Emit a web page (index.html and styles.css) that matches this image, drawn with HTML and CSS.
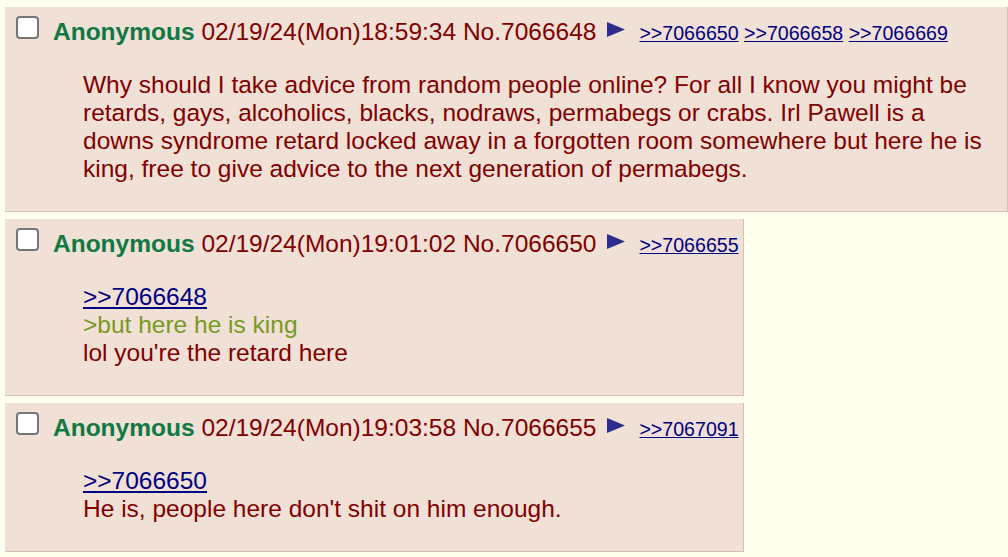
FILE: index.html
```html
<!DOCTYPE html>
<html>
<head>
<meta charset="utf-8">
<link rel="stylesheet" href="styles.css">
</head>
<body>
<div class="thread">
  <div class="reply">
    <div class="post-info">
      <span class="check"></span>
      <span class="info"><span class="name">Anonymous</span> <span class="date">02/19/24(Mon)18:59:34</span> <span class="no">No.7066648</span><svg class="menu" width="18" height="15" viewBox="0 0 18 15"><polygon points="0,0 18,7.5 0,15" fill="#2e2c8c"/></svg><span class="backlinks"><a href="#">&gt;&gt;7066650</a> <a href="#">&gt;&gt;7066658</a> <a href="#">&gt;&gt;7066669</a></span></span>
    </div>
    <blockquote class="message">Why should I take advice from random people online? For all I know you might be retards, gays, alcoholics, blacks, nodraws, permabegs or crabs. Irl Pawell is a downs syndrome retard locked away in a forgotten room somewhere but here he is king, free to give advice to the next generation of permabegs.</blockquote>
  </div>

  <div class="reply">
    <div class="post-info">
      <span class="check"></span>
      <span class="info"><span class="name">Anonymous</span> <span class="date">02/19/24(Mon)19:01:02</span> <span class="no">No.7066650</span><svg class="menu" width="18" height="15" viewBox="0 0 18 15"><polygon points="0,0 18,7.5 0,15" fill="#2e2c8c"/></svg><span class="backlinks"><a href="#">&gt;&gt;7066655</a></span></span>
    </div>
    <blockquote class="message"><a href="#" class="quotelink">&gt;&gt;7066648</a><br><span class="quote">&gt;but here he is king</span><br>lol you're the retard here</blockquote>
  </div>

  <div class="reply">
    <div class="post-info">
      <span class="check"></span>
      <span class="info"><span class="name">Anonymous</span> <span class="date">02/19/24(Mon)19:03:58</span> <span class="no">No.7066655</span><svg class="menu" width="18" height="15" viewBox="0 0 18 15"><polygon points="0,0 18,7.5 0,15" fill="#2e2c8c"/></svg><span class="backlinks"><a href="#">&gt;&gt;7067091</a></span></span>
    </div>
    <blockquote class="message"><a href="#" class="quotelink">&gt;&gt;7066650</a><br>He is, people here don't shit on him enough.</blockquote>
  </div>
</div>
</body>
</html>
```

FILE: styles.css
```css
html, body {
  margin: 0;
  padding: 0;
  background: #ffffee;
}

body {
  font-family: "Liberation Sans", Arial, sans-serif;
  font-size: 24.5px;
  line-height: 28px;
  color: #800000;
}

.thread {
  padding: 7px 0 0 5px;
}

.reply {
  display: table;
  background: #f0e0d6;
  border-right: 1px solid #d9bfb7;
  border-bottom: 1px solid #d9bfb7;
  padding: 10px 4px 0 11px;
  margin-bottom: 7px;
  box-sizing: border-box;
}

.post-info {
  display: flex;
  align-items: flex-start;
  height: 28px;
  white-space: nowrap;
}

.check {
  flex: none;
  width: 23px;
  height: 23px;
  box-sizing: border-box;
  border: 2px solid #767676;
  border-radius: 4px;
  background: #ffffff;
  margin-top: -1px;
  margin-right: 14px;
}

.info {
  display: block;
  padding-top: 1px;
}

.name {
  color: #117743;
  font-weight: bold;
}

.menu {
  vertical-align: top;
  margin: 4px 14px 0 11px;
}

.backlinks {
  font-size: 0.8em;
}

a {
  color: #000080;
  text-decoration: underline;
}

.message {
  margin: 26px 12px 28px 67px;
}

.quote {
  color: #789922;
}
```
